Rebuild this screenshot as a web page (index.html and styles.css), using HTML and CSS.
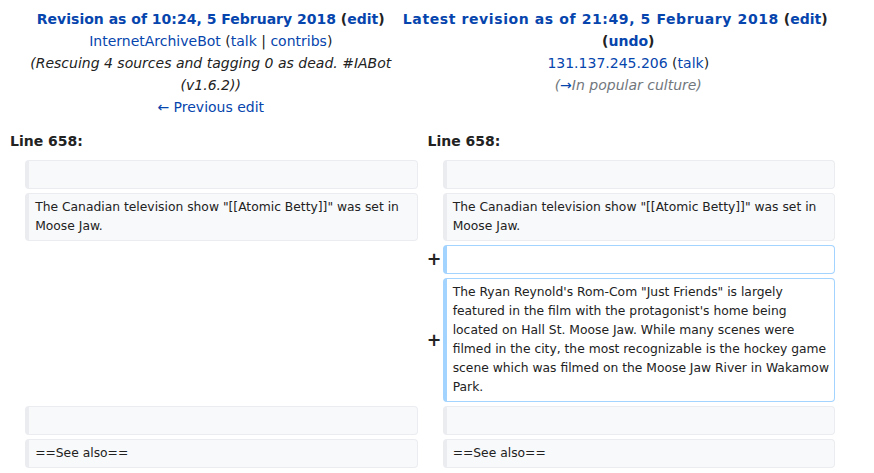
FILE: index.html
```html
<!DOCTYPE html>
<html lang="en">
<head>
<meta charset="utf-8">
<title>Diff</title>
<link rel="stylesheet" href="styles.css">
</head>
<body>
<table class="diff">
  <colgroup>
    <col class="col-marker"><col class="col-content"><col class="col-marker"><col class="col-content">
  </colgroup>
  <tr class="title-row">
    <td colspan="2" class="diff-title">
      <div class="t-line"><strong><a href="#">Revision as of 10:24, 5 February 2018</a> (<a href="#">edit</a>)</strong></div>
      <div class="t-line"><a href="#">InternetArchiveBot</a> (<a href="#">talk</a> | <a href="#">contribs</a>)</div>
      <div class="t-line comment">(Rescuing 4 sources and tagging 0 as dead. #IABot (v1.6.2))</div>
      <div class="t-line"><a href="#">← Previous edit</a></div>
    </td>
    <td colspan="2" class="diff-title">
      <div class="t-line wide"><strong><a href="#" class="spaced">Latest revision as of 21:49, 5 February 2018</a> (<a href="#">edit</a>)</strong></div>
      <div class="t-line"><strong>(<a href="#">undo</a>)</strong></div>
      <div class="t-line"><a href="#">131.137.245.206</a> (<a href="#">talk</a>)</div>
      <div class="t-line comment auto">(<a href="#">→</a>In popular culture)</div>
    </td>
  </tr>
  <tr>
    <td colspan="2" class="diff-lineno">Line 658:</td>
    <td colspan="2" class="diff-lineno">Line 658:</td>
  </tr>
  <tr>
    <td class="diff-marker"></td>
    <td class="diff-context"></td>
    <td class="diff-marker"></td>
    <td class="diff-context"></td>
  </tr>
  <tr>
    <td class="diff-marker"></td>
    <td class="diff-context"><div>The Canadian television show "[[Atomic Betty]]" was set in Moose Jaw.</div></td>
    <td class="diff-marker"></td>
    <td class="diff-context"><div>The Canadian television show "[[Atomic Betty]]" was set in Moose Jaw.</div></td>
  </tr>
  <tr>
    <td colspan="2" class="diff-empty"></td>
    <td class="diff-marker"><span class="mark">+</span></td>
    <td class="diff-addedline"></td>
  </tr>
  <tr>
    <td colspan="2" class="diff-empty"></td>
    <td class="diff-marker"><span class="mark">+</span></td>
    <td class="diff-addedline"><div>The Ryan Reynold's Rom-Com "Just Friends" is largely featured in the film with the protagonist's home being located on Hall St. Moose Jaw. While many scenes were filmed in the city, the most recognizable is the hockey game scene which was filmed on the Moose Jaw River in Wakamow Park.</div></td>
  </tr>
  <tr>
    <td class="diff-marker"></td>
    <td class="diff-context"></td>
    <td class="diff-marker"></td>
    <td class="diff-context"></td>
  </tr>
  <tr>
    <td class="diff-marker"></td>
    <td class="diff-context"><div>==See also==</div></td>
    <td class="diff-marker"></td>
    <td class="diff-context"><div>==See also==</div></td>
  </tr>
</table>
</body>
</html>
```
FILE: styles.css
```css
html, body {
  margin: 0;
  padding: 0;
  background: #ffffff;
}
body {
  font-family: "DejaVu Sans", sans-serif;
  font-size: 14px;
  color: #222222;
}
a {
  color: #0645ad;
  text-decoration: none;
}
table.diff {
  width: 839px;
  border-collapse: separate;
  border-spacing: 4px;
  table-layout: fixed;
  margin-top: 3px;
}
.col-marker { width: 17px; }
.col-content { width: auto; }
td {
  padding: 1px;
}
.diff-title {
  text-align: center;
  vertical-align: top;
  line-height: 22px;
}
.t-line.wide {
  margin-left: -26px;
}
.spaced {
  letter-spacing: 0.6px;
}
.comment {
  font-style: italic;
}
.comment.auto {
  color: #72777d;
}
.diff-lineno {
  font-weight: bold;
  line-height: 22px;
  padding: 7px 1px 4px 6px;
}
.diff-marker {
  text-align: right;
  font-weight: bold;
  font-size: 17.5px;
  line-height: 1.2;
  vertical-align: middle;
  padding: 0;
  color: #222222;
}
.mark {
  display: inline-block;
  margin-right: -3px;
}
.diff-context, .diff-addedline {
  font-size: 12.32px;
  line-height: 19px;
  vertical-align: top;
  white-space: pre-wrap;
  border-style: solid;
  border-width: 1px 1px 1px 4px;
  border-radius: 4px;
  padding: 4px 3px 4px 6.16px;
  height: 19px;
  box-sizing: content-box;
}
.diff-context {
  background: #f8f9fa;
  border-color: #eaecf0;
  color: #222222;
}
.diff-addedline {
  background: #ffffff;
  border-color: #a3d3ff;
  color: #222222;
}
```
